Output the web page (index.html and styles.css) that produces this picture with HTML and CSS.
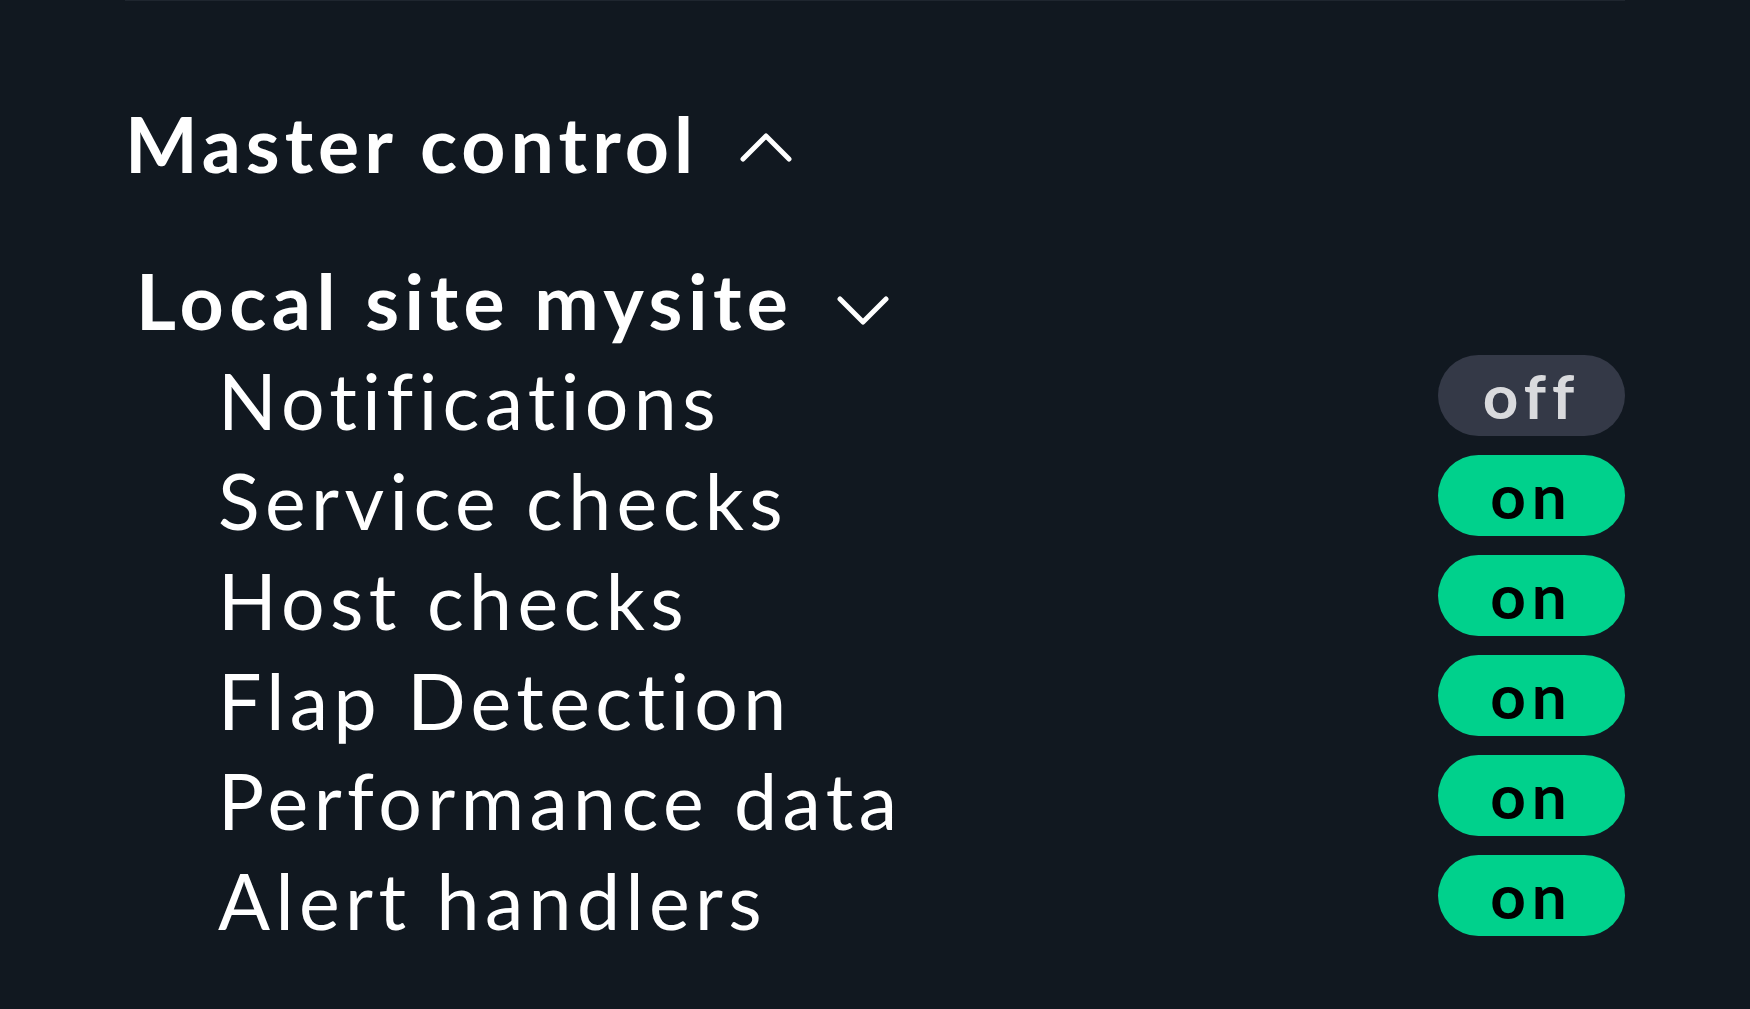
FILE: index.html
```html
<!DOCTYPE html>
<html lang="en">
<head>
  <meta charset="UTF-8" />
  <title>Master control</title>
  <link rel="stylesheet" href="styles.css">
</head>
<body>

  <div class="snapin">
    <h2 class="snapin-title">
      Master control
      <svg class="chevron up" viewBox="0 0 52 31" width="52" height="31">
        <polyline points="3,28 26,5 49,28" />
      </svg>
    </h2>

    <div class="site">
      <h3 class="site-title">
        Local site mysite
        <svg class="chevron down" viewBox="0 0 52 31" width="52" height="31">
          <polyline points="3,3 26,26 49,3" />
        </svg>
      </h3>

      <!-- one row per switch -->
      <div class="row">
        <span class="label">Notifications</span>
        <span class="toggle off">off</span>
      </div>
      <div class="row">
        <span class="label">Service checks</span>
        <span class="toggle on">on</span>
      </div>
      <div class="row">
        <span class="label">Host checks</span>
        <span class="toggle on">on</span>
      </div>
      <div class="row">
        <span class="label">Flap Detection</span>
        <span class="toggle on">on</span>
      </div>
      <div class="row">
        <span class="label">Performance data</span>
        <span class="toggle on">on</span>
      </div>
      <div class="row">
        <span class="label">Alert handlers</span>
        <span class="toggle on">on</span>
      </div>
    </div>
  </div>

</body>
</html>
```

FILE: styles.css
```css
* {
  box-sizing: border-box;
  font-family: 'Lato', sans-serif;
}

body {
  margin: 0;
  background-color: #111820;
  color: #fff;
}

.snapin {
  width: 1500px;
  margin: 0 auto;
  border-top: 1px solid #1f262f;
  padding-top: 92px;
}

.snapin-title,
.site-title {
  margin: 0;
  font-size: 77px;
  font-weight: 700;
  line-height: 100px;
  letter-spacing: 5px;
  display: flex;
  align-items: center;
}

.site-title {
  margin-top: 57px;
  padding-left: 11px;
  letter-spacing: 5.5px;
}

.chevron {
  fill: none;
  stroke: #fff;
  stroke-width: 5;
  stroke-linecap: round;
  stroke-linejoin: round;
}

.chevron.up {
  margin-left: 42px;
  margin-top: 6px;
}

.chevron.down {
  margin-left: 44px;
  margin-top: 22px;
}

.row {
  display: flex;
  justify-content: space-between;
  height: 100px;
}

.label {
  padding-left: 93px;
  font-size: 77px;
  line-height: 100px;
  letter-spacing: 5.4px;
}

.toggle {
  margin-top: 5px;
  width: 187px;
  height: 81px;
  border-radius: 41px;
  text-align: center;
  font-size: 62px;
  font-weight: 700;
  line-height: 81px;
  letter-spacing: 6px;
}

.toggle.on {
  background-color: #00d18c;
  color: #000;
}

.toggle.off {
  background-color: #343947;
  color: #d9dadd;
}
```
